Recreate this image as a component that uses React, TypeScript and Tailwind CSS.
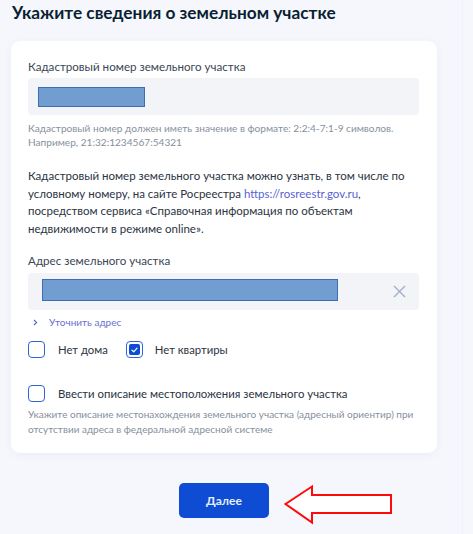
import React from "react";

function Checkbox({ checked = false }: { checked?: boolean }) {
  return (
    <span className="flex h-[17px] w-[17px] shrink-0 items-center justify-center rounded-[4px] border-[1.5px] border-[#2f63d6] bg-white">
      {checked && (
        <span className="flex h-[11px] w-[11px] items-center justify-center rounded-[2px] bg-[#0d4cd3]">
          <svg width="7" height="6" viewBox="0 0 7 6" fill="none">
            <path d="M1 3.2 2.8 4.8 6 1.2" stroke="white" strokeWidth="1.2" strokeLinecap="round" strokeLinejoin="round" />
          </svg>
        </span>
      )}
    </span>
  );
}

export default function App() {
  return (
    <main className="relative h-[534px] w-[473px] overflow-hidden bg-[#f5f7fc] font-['Lato','Noto_Sans',sans-serif] text-[#0b1f33]">
      <h1 className="whitespace-nowrap pl-3 pt-[1px] text-[17.3px] font-bold leading-6 text-[#0b1f33]">
        Укажите сведения о земельном участке
      </h1>

      <section className="ml-[11px] mt-4 w-[426px] whitespace-nowrap rounded-[9px] bg-white pl-[17px] pr-[18px] pt-[17px] pb-4 shadow-[0_2px_8px_rgba(60,80,140,0.06)]">
        <div className="text-[11.6px] leading-[18px] text-[#3a4656]">Кадастровый номер земельного участка</div>
        <div className="mt-[2px] flex h-[37px] items-center rounded-[4px] bg-[#f2f4f8] pl-[10px]">
          <div className="h-[20px] w-[107px] border border-[#3d6db3] bg-[#719dd0]" />
        </div>
        <p className="mt-[6px] text-[10.1px] leading-[14px] text-[#86909c]">
          Кадастровый номер должен иметь значение в формате: 2:2:4-7:1-9 символов.
          <br />
          Например, 21:32:1234567:54321
        </p>

        <p className="mt-[18px] text-[11.5px] leading-[17.5px] text-[#2a3442]">
          Кадастровый номер земельного участка можно узнать, в том числе по
          <br />
          условному номеру, на сайте Росреестра{" "}
          <span className="text-[#5a62d4]">https://rosreestr.gov.ru</span>,
          <br />
          посредством сервиса «Справочная информация по объектам
          <br />
          недвижимости в режиме online».
        </p>

        <div className="mt-[15px] text-[11.6px] leading-[18px] text-[#3a4656]">Адрес земельного участка</div>
        <div className="mt-[3px] flex h-[37px] items-center justify-between rounded-[4px] bg-[#f2f4f8] pl-[14px] pr-[13px]">
          <div className="mb-[3px] h-[22px] w-[296px] border border-[#3d6db3] bg-[#719dd0]" />
          <svg width="13" height="13" viewBox="0 0 13 13" fill="none">
            <path d="M1 1 12 12M12 1 1 12" stroke="#a3adc9" strokeWidth="1.4" />
          </svg>
        </div>

        <div className="mt-[5px] flex items-center text-[10px] leading-[14px] text-[#6a70cf]">
          <svg width="5" height="7" viewBox="0 0 5 7" fill="none" className="ml-[5px]">
            <path d="M1 1 3.6 3.5 1 6" stroke="#5a62d4" strokeWidth="1.1" />
          </svg>
          <span className="ml-[11px]">Уточнить адрес</span>
        </div>

        <div className="mt-[12px] flex items-center text-[11.3px] leading-[17px] text-[#2a3442]">
          <Checkbox />
          <span className="ml-[13px]">Нет дома</span>
          <span className="ml-[18px]">
            <Checkbox checked />
          </span>
          <span className="ml-[12px]">Нет квартиры</span>
        </div>

        <div className="mt-[27px] flex items-center text-[11.4px] leading-[17px] text-[#2a3442]">
          <Checkbox />
          <span className="ml-[13px]">Ввести описание местоположения земельного участка</span>
        </div>
        <p className="mt-[5px] text-[10px] leading-[15px] text-[#86909c]">
          Укажите описание местонахождения земельного участка (адресный ориентир) при
          <br />
          отсутствии адреса в федеральной адресной системе
        </p>
      </section>

      <div className="mt-[30px] flex items-center pl-[179px]">
        <button className="h-[35px] w-[90px] rounded-[5px] bg-[#0d4cd3] text-[12px] font-bold text-[#e8eefc]">
          Далее
        </button>
      </div>

      <svg className="absolute left-[283px] top-[484px]" width="112" height="42" viewBox="283 484 112 42" fill="none">
        <path d="M285.5 504 L312 486.5 L312 495 L391 495 L391 513 L312 513 L312 522.5 Z" fill="white" stroke="#ff0a0a" strokeWidth="2" />
      </svg>

      <div className="absolute right-[10px] top-0 h-full w-px bg-[#eef1f8]" />
    </main>
  );
}
